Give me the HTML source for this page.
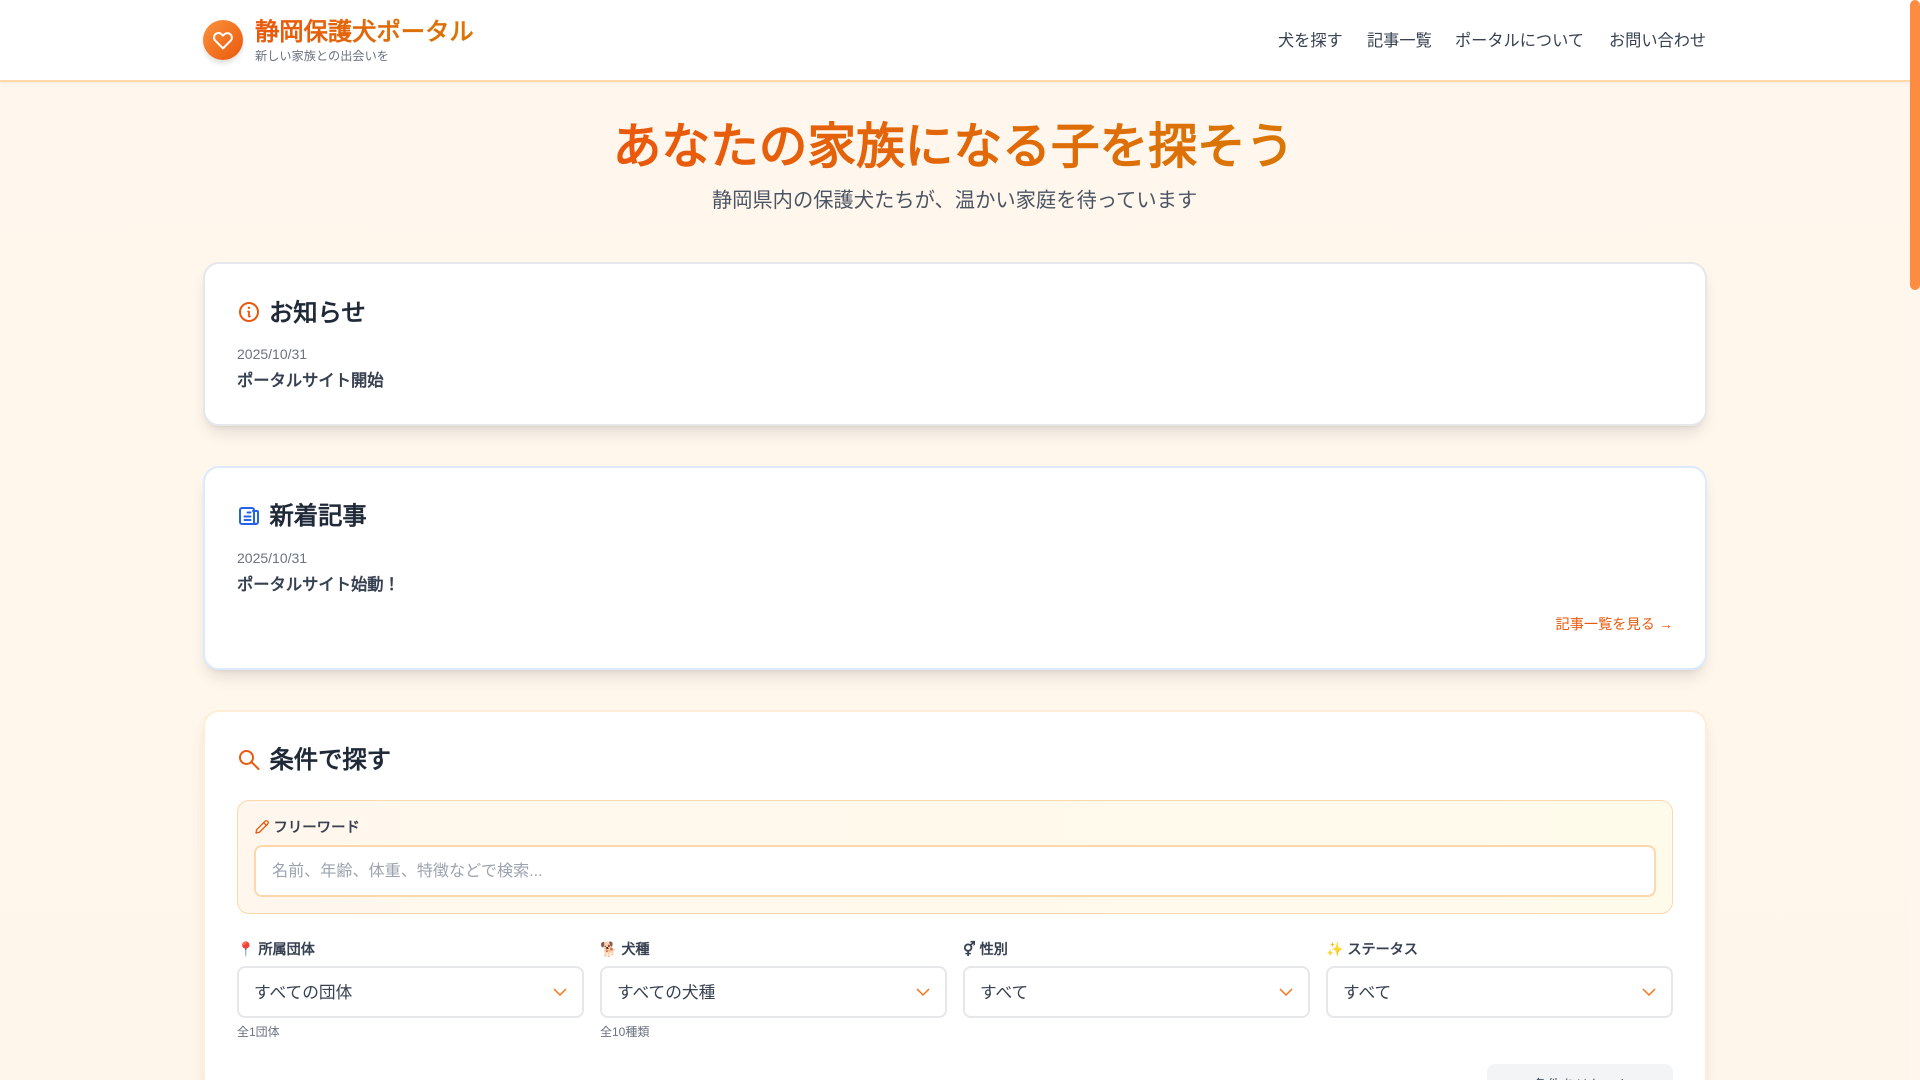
<!DOCTYPE html>
<html lang="ja"><head><meta charset="utf-8"><title>静岡保護犬ポータル</title>
<style>
*{box-sizing:border-box;margin:0;padding:0}
html,body{width:1920px;height:1080px;overflow:hidden}
body{background:linear-gradient(180deg,#fff7ed 0,#fff6eb 1080px);position:relative;font-family:"Liberation Sans","WenQuanYi Zen Hei",sans-serif;color:#1f2937}
.a{position:absolute;white-space:nowrap}
.grad{background:linear-gradient(90deg,#ea580c,#d97706);-webkit-background-clip:text;background-clip:text;color:transparent}
.card{position:absolute;left:203px;width:1504px;background:#fff;border:2px solid #e5e7eb;border-radius:16px;box-shadow:0 10px 15px -3px rgba(0,0,0,.1),0 4px 6px -4px rgba(0,0,0,.1)}
.h{font-size:24.3px;line-height:32px;font-weight:700;color:#1f2937}
.date{font-size:14px;line-height:20px;color:#6b7280}
.t{font-size:16.3px;line-height:24px;font-weight:600;color:#374151}
.nav{font-size:16.2px;line-height:24px;color:#374151;top:29px}
.lab{font-size:14.1px;line-height:20px;font-weight:600;color:#374151;top:939px}
.sel{position:absolute;top:966px;height:52px;width:347px;background:#fff;border:2px solid #e5e7eb;border-radius:8px;font-size:16.7px;line-height:50px;padding-left:15px;color:#374151}
.sel svg{position:absolute;right:14px;top:16px}
.hint{font-size:12px;line-height:16px;color:#6b7280;top:1024px}
</style></head><body>
<div class="a" style="left:0;top:0;width:1920px;height:82px;background:#fff;border-bottom:2px solid #fed7aa;box-shadow:0 1px 3px rgba(0,0,0,.06)"></div>
<div class="a" style="left:203px;top:20px;width:40px;height:40px;border-radius:50%;background:linear-gradient(135deg,#fb923c,#ea580c);box-shadow:0 4px 6px -1px rgba(0,0,0,.15)">
<svg width="24" height="24" viewBox="0 0 24 24" style="position:absolute;left:8px;top:8px" fill="none" stroke="#fff" stroke-width="2" stroke-linecap="round" stroke-linejoin="round"><path d="M4.32 6.32a4.5 4.5 0 0 0 0 6.36L12 20.36l7.68-7.68a4.5 4.5 0 0 0-6.36-6.36L12 7.64l-1.32-1.32a4.5 4.5 0 0 0-6.36 0z"/></svg></div>
<div class="a grad" style="left:255px;top:17px;font-size:24.3px;line-height:32px;font-weight:700">静岡保護犬ポータル</div>
<div class="a" style="left:255px;top:48px;font-size:12.2px;line-height:16px;color:#6b7280">新しい家族との出会いを</div>
<div class="a nav" style="left:1278px">犬を探す</div>
<div class="a nav" style="left:1367px">記事一覧</div>
<div class="a nav" style="left:1455px">ポータルについて</div>
<div class="a nav" style="left:1609px">お問い合わせ</div>

<div class="a" style="left:0;width:1907px;top:115px;text-align:center"><span class="grad" style="font-size:48.7px;line-height:64px;font-weight:700">あなたの家族になる子を探そう</span></div>
<div class="a" style="left:0;width:1909px;top:187px;text-align:center;font-size:20.3px;line-height:28px;color:#4b5563">静岡県内の保護犬たちが、温かい家庭を待っています</div>

<div class="card" style="top:262px;height:164px"></div>
<svg class="a" style="left:237px;top:300px" width="24" height="24" viewBox="0 0 24 24" fill="none" stroke="#ea580c" stroke-width="2" stroke-linecap="round" stroke-linejoin="round"><circle cx="12" cy="12" r="9"/><path d="M11 11.500h1v5h1" stroke-width="1.800"/><path d="M12 7.800h.01" stroke-width="2.400"/></svg>
<div class="a h" style="left:269px;top:298px">お知らせ</div>
<div class="a date" style="left:237px;top:344px">2025/10/31</div>
<div class="a t" style="left:237px;top:369px">ポータルサイト開始</div>

<div class="card" style="top:466px;height:204px;border-color:#dbeafe"></div>
<svg class="a" style="left:237px;top:504px" width="24" height="24" viewBox="0 0 24 24" fill="none" stroke="#2563eb" stroke-width="2" stroke-linecap="round" stroke-linejoin="round"><path d="M19 20H5a2 2 0 0 1-2-2V6a2 2 0 0 1 2-2h10a2 2 0 0 1 2 2v12a2 2 0 0 0 2 2 2 2 0 0 0 2-2V8a1 1 0 0 0-1-1h-4"/><path d="M10.500 8.500h3M7.500 12.500h6M7.500 16h6"/></svg>
<div class="a h" style="left:269.500px;top:501px">新着記事</div>
<div class="a date" style="left:237px;top:548px">2025/10/31</div>
<div class="a t" style="left:237px;top:573px">ポータルサイト始動！</div>
<div class="a" style="right:247px;top:615px;font-size:14.2px;line-height:20px;color:#ea580c">記事一覧を見る →</div>

<div class="card" style="top:710px;height:370px;border-bottom:0;border-radius:16px 16px 0 0;border-color:#ffedd5"></div>
<svg class="a" style="left:237px;top:748px" width="24" height="24" viewBox="0 0 24 24" fill="none" stroke="#ea580c" stroke-width="2" stroke-linecap="round" stroke-linejoin="round"><circle cx="9.500" cy="9.500" r="6.500"/><path d="M21.500 21l-7-7"/></svg>
<div class="a h" style="left:269.500px;top:745px">条件で探す</div>

<div class="a" style="left:237px;top:800px;width:1436px;height:114px;border:1px solid #fed7aa;border-radius:12px;background:linear-gradient(90deg,#fff7ed,#fffbeb)"></div>
<svg class="a" style="left:254px;top:819px" width="16" height="16" viewBox="0 0 24 24" fill="none" stroke="#ea580c" stroke-width="2" stroke-linecap="round" stroke-linejoin="round"><path d="M16.500 3.500a2.800 2.800 0 0 1 4 4L8 20l-5 1 1-5z"/><path d="M14.500 5.500l4 4"/></svg>
<div class="a" style="left:273.500px;top:818px;font-size:14.4px;line-height:20px;font-weight:600;color:#374151">フリーワード</div>
<div class="a" style="left:254px;top:845px;width:1402px;height:52px;background:#fff;border:2px solid #fed7aa;border-radius:8px;font-size:16.1px;line-height:49px;padding-left:16px;color:#9ca3af">名前、年齢、体重、特徴などで検索...</div>

<div class="a lab" style="left:237px">📍 所属団体</div>
<div class="a lab" style="left:600px">🐕 犬種</div>
<div class="a lab" style="left:963px">⚥ 性別</div>
<div class="a lab" style="left:1326px">✨ ステータス</div>

<div class="sel" style="left:237px">すべての団体<svg width="16" height="16" viewBox="0 0 16 16" fill="none" stroke="#f97316" stroke-width="1.500"><path d="M2 5l6 6 6-6"/></svg></div>
<div class="sel" style="left:600px">すべての犬種<svg width="16" height="16" viewBox="0 0 16 16" fill="none" stroke="#f97316" stroke-width="1.500"><path d="M2 5l6 6 6-6"/></svg></div>
<div class="sel" style="left:963px">すべて<svg width="16" height="16" viewBox="0 0 16 16" fill="none" stroke="#f97316" stroke-width="1.500"><path d="M2 5l6 6 6-6"/></svg></div>
<div class="sel" style="left:1326px">すべて<svg width="16" height="16" viewBox="0 0 16 16" fill="none" stroke="#f97316" stroke-width="1.500"><path d="M2 5l6 6 6-6"/></svg></div>
<div class="a hint" style="left:237px">全1団体</div>
<div class="a hint" style="left:600px">全10種類</div>

<div class="a" style="left:1487px;top:1064px;width:186px;height:16px;overflow:hidden;border-radius:8px 8px 0 0;background:#f3f4f6;padding:11px 0 0 46px;font-size:14px;line-height:20px;color:#4b5563;font-weight:500">条件をリセット</div>

<div class="a" style="left:1910px;top:82px;width:10px;height:998px;background:#fff7ed"></div>
<div class="a" style="left:1910px;top:0;width:10px;height:290px;border-radius:5px;background:#fb8c42"></div>
</body></html>
